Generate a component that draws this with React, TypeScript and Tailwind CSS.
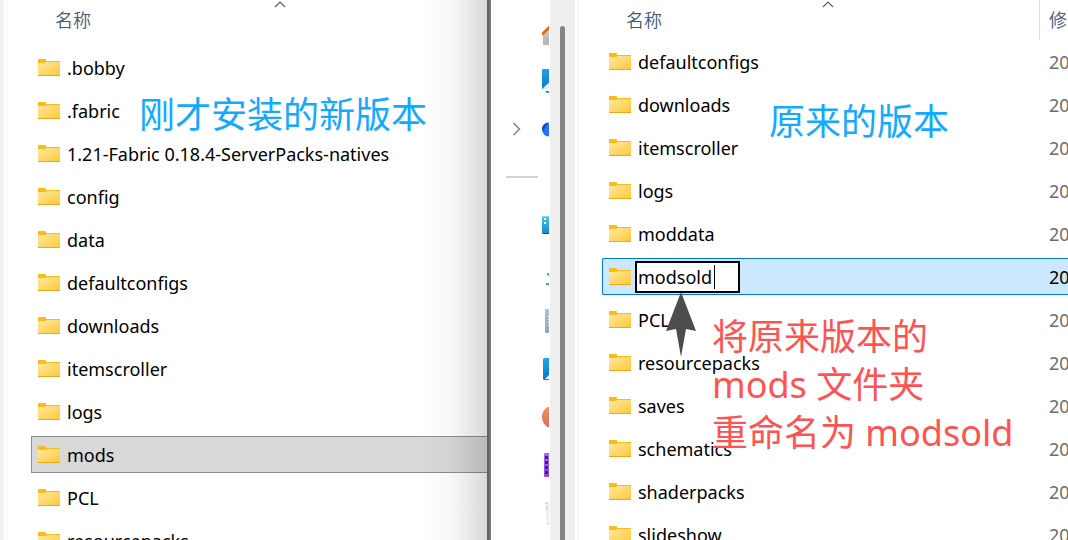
import React from "react";

type Entry = { name: string; state?: "inactive" | "renaming" };

const installed: Entry[] = [
  { name: ".bobby" },
  { name: ".fabric" },
  { name: "1.21-Fabric 0.18.4-ServerPacks-natives" },
  { name: "config" },
  { name: "data" },
  { name: "defaultconfigs" },
  { name: "downloads" },
  { name: "itemscroller" },
  { name: "logs" },
  { name: "mods", state: "inactive" },
  { name: "PCL" },
  { name: "resourcepacks" },
];

const original: Entry[] = [
  { name: "defaultconfigs" },
  { name: "downloads" },
  { name: "itemscroller" },
  { name: "logs" },
  { name: "moddata" },
  { name: "modsold", state: "renaming" },
  { name: "PCL" },
  { name: "resourcepacks" },
  { name: "saves" },
  { name: "schematics" },
  { name: "shaderpacks" },
  { name: "slideshow" },
];

function Gradients() {
  return (
    <svg className="absolute size-0" aria-hidden="true">
      <defs>
        <linearGradient id="folder" x1="0" y1="0" x2="1" y2="1">
          <stop offset="0" stopColor="#ffe8a3" />
          <stop offset="1" stopColor="#ffc937" />
        </linearGradient>
        <linearGradient id="wall" x1="0" y1="0" x2="0" y2="1">
          <stop offset="0" stopColor="#d6d6d6" />
          <stop offset="1" stopColor="#b2b2b2" />
        </linearGradient>
        <linearGradient id="azure" x1="0" y1="0" x2="0" y2="1">
          <stop offset="0" stopColor="#1ea5e8" />
          <stop offset="1" stopColor="#0a77cd" />
        </linearGradient>
        <linearGradient id="teal" x1="0" y1="0" x2="0" y2="1">
          <stop offset="0" stopColor="#36cfe0" />
          <stop offset="1" stopColor="#1786cc" />
        </linearGradient>
        <linearGradient id="slate" x1="0" y1="0" x2="0" y2="1">
          <stop offset="0" stopColor="#b4c2da" />
          <stop offset="1" stopColor="#8ba3c7" />
        </linearGradient>
        <linearGradient id="coral" x1="0" y1="0" x2="0" y2="1">
          <stop offset="0" stopColor="#f4925a" />
          <stop offset="1" stopColor="#d8686c" />
        </linearGradient>
        <linearGradient id="violet" x1="0" y1="0" x2="0" y2="1">
          <stop offset="0" stopColor="#b167f5" />
          <stop offset="1" stopColor="#8a46e6" />
        </linearGradient>
      </defs>
    </svg>
  );
}

function Folder() {
  return (
    <svg viewBox="0 0 22 17" className="h-[17px] w-[22px] shrink-0" aria-hidden="true">
      <path d="M0 0.8Q0 0 0.8 0H7Q8 0 8 1V2H21.5Q22 2 22 2.5V5H0Z" fill="#f9bb16" />
      <path d="M0 4H7L8.5 3H22V16.5H0Z" fill="url(#folder)" />
      <path d="M0 16H22V16.4Q22 17 21.4 17H0.6Q0 17 0 16.4Z" fill="#eaaa1c" />
    </svg>
  );
}

function SortMark() {
  return (
    <svg viewBox="0 0 12 7" className="h-[7px] w-3" aria-hidden="true">
      <path d="M1 6L6 1L11 6" fill="none" stroke="#5c5c5c" strokeWidth="1.2" />
    </svg>
  );
}

function NameCell({ entry, box }: { entry: Entry; box: string }) {
  return (
    <td className="p-0">
      <div className={`flex h-[37px] items-center border-y pl-1.5 ${box}`}>
        <Folder />
        {entry.state === "renaming" ? (
          <div className="relative ml-1">
            <input
              aria-label="名称"
              defaultValue={entry.name}
              className="block h-8 w-[105px] border-2 border-black bg-white pl-px text-lg leading-7 text-black outline-none"
            />
            <span className="absolute top-1 left-[79px] h-6 w-px bg-black" />
          </div>
        ) : (
          <span className="ml-[7px] whitespace-nowrap">{entry.name}</span>
        )}
      </div>
    </td>
  );
}

function boxFor(entry: Entry) {
  if (entry.state === "inactive") return "border-l border-[#8f8f8f] bg-[#d9d9d9]";
  if (entry.state === "renaming") return "rounded-l-xs border-l border-[#0078d4] bg-[#cce8ff]";
  return "border-l border-transparent";
}

function NavRow({ children, open }: { children: React.ReactNode; open?: boolean }) {
  return (
    <li className="flex h-12 shrink-0 items-center pl-[21px]">
      <span className="w-[30px] shrink-0">
        {open && (
          <svg viewBox="0 0 10 14" className="h-3.5 w-2.5" aria-hidden="true">
            <path d="M1.5 1L7.5 7L1.5 13" fill="none" stroke="#858585" strokeWidth="1.5" />
          </svg>
        )}
      </span>
      <svg viewBox="0 0 24 24" className="size-6 shrink-0" aria-hidden="true">
        {children}
      </svg>
    </li>
  );
}

function Navigation() {
  return (
    <nav className="w-[58px] shrink-0 overflow-hidden">
      <ul className="flex flex-col pt-[9px]">
        <NavRow>
          <path d="M1 13L12 2L23 13V23Q23 24 22 24H2Q1 24 1 23Z" fill="url(#wall)" />
          <path d="M0 13.5L12 2L24 13.5" fill="none" stroke="#e8690b" strokeWidth="2.8" />
        </NavRow>
        <NavRow>
          <rect width="24" height="20" rx="1" fill="url(#azure)" />
          <path d="M1 19L8 12.5V20H1Z" fill="#d9f0fd" />
          <path d="M3 22H21L20 24H5Z" fill="#3f86b8" />
        </NavRow>
        <NavRow open>
          <circle cx="7" cy="12.5" r="7" fill="#1f74f4" />
          <path d="M0 13.5Q-0.5 7 6 5.5L2 12.5Z" fill="#1549c8" />
        </NavRow>
        <li className="flex h-12 shrink-0 items-center pl-[15px]">
          <span className="h-0.5 w-8 bg-[#d4d4d4]" />
        </li>
        <NavRow>
          <rect y="3" width="24" height="18" rx="1" fill="url(#teal)" />
          <path d="M0 3.5H24" stroke="#7fe3ea" />
          <path d="M1 20.5H24" stroke="#0b4a73" />
          <path d="M2 5H4V7H2ZM2 9H4V11H2Z" fill="#fff" />
        </NavRow>
        <NavRow>
          <path d="M5 12H7V15H6V14H5ZM4 22H20V24H4Z" fill="#1fc38b" />
        </NavRow>
        <NavRow>
          <rect x="3" width="18" height="24" rx="1" fill="url(#slate)" />
          <path d="M6 7.5H18M6 10.5H18M6 13.5H18M6 16.5H18" stroke="#fff" />
        </NavRow>
        <NavRow>
          <rect x="1" y="1" width="22" height="22" rx="1.5" fill="url(#azure)" />
          <path d="M3 22L9 16V22Z" fill="#fff" />
        </NavRow>
        <NavRow>
          <circle cx="11.5" cy="12" r="11.5" fill="url(#coral)" />
        </NavRow>
        <NavRow>
          <rect x="2" width="20" height="24" rx="1" fill="url(#violet)" />
          <path d="M3 3H6V6H3ZM3 8H6V11H3ZM3 13H6V16H3ZM3 18H6V21H3Z" fill="#42236e" />
        </NavRow>
        <NavRow>
          <path d="M3 2H21L19 23H5Z" fill="#eeefef" />
          <path d="M3 2.5L6 1.5M5 22.5L7 23M6 5L4.5 9" fill="none" stroke="#c4c6c8" />
        </NavRow>
      </ul>
    </nav>
  );
}

export default function App() {
  return (
    <main className="relative grid h-screen grid-cols-[minmax(0,491fr)_minmax(0,577fr)] overflow-hidden bg-white font-['Noto_Sans','Noto_Sans_CJK_SC',sans-serif] text-lg leading-7 text-black">
      <Gradients />
      <section className="relative flex min-w-0 overflow-hidden border-r-2 border-[#757575]">
        <div className="w-1 shrink-0 bg-[#f0f0f0]" />
        <div className="ml-0.5 w-0.5 shrink-0 bg-[#f7f7f7]" />
        <div className="min-w-0 flex-1 pl-[23px]">
          <table className="w-full table-fixed border-collapse">
            <thead>
              <tr>
                <th className="relative h-[46px] p-0 align-top font-[350] text-[#44597c]">
                  <div className="flex h-10 items-center pl-6">名称</div>
                  <span className="absolute top-px left-[243px] flex">
                    <SortMark />
                  </span>
                </th>
              </tr>
            </thead>
            <tbody>
              {installed.map((entry) => (
                <tr key={entry.name} className="h-[43px]">
                  <NameCell entry={entry} box={boxFor(entry)} />
                </tr>
              ))}
            </tbody>
          </table>
        </div>
        <div className="w-0.5 shrink-0 bg-[#616161]" />
        <div className="pointer-events-none absolute inset-y-0 right-0.5 w-[70px] bg-linear-to-r from-transparent via-black/3 to-black/15" />
        <p className="absolute top-[91px] left-[139px] text-4xl leading-[48px] font-normal whitespace-nowrap text-[#12a9ff]">
          刚才安装的新版本
        </p>
      </section>

      <section className="relative flex min-w-0 overflow-hidden">
        <Navigation />
        <div className="ml-px flex w-[25px] shrink-0 bg-[#efefef] pt-[26px] pl-2.5">
          <div className="w-[5px] rounded-t-full bg-[#858585]" />
        </div>
        <div className="ml-0.5 w-0.5 shrink-0 bg-[#f7f7f7]" />
        <div className="min-w-0 flex-1 overflow-hidden pl-[23px]">
          <table className="w-full table-fixed border-collapse">
            <thead>
              <tr>
                <th className="relative h-10 p-0 font-[350] text-[#44597c]">
                  <div className="flex h-10 items-center pl-6">名称</div>
                  <span className="absolute top-px left-[220px] flex">
                    <SortMark />
                  </span>
                </th>
                <th className="w-[29px] p-0 font-[350] text-[#44597c]">
                  <div className="flex h-10 items-center border-l border-[#dedede] pl-[9px]">修</div>
                </th>
              </tr>
            </thead>
            <tbody>
              {original.map((entry) => (
                <tr key={entry.name} className="h-[43px]">
                  <NameCell entry={entry} box={boxFor(entry)} />
                  <td className="p-0">
                    <div
                      className={
                        entry.state === "renaming"
                          ? "flex h-[37px] items-center overflow-hidden border-y border-[#0078d4] bg-[#cce8ff] pl-2.5"
                          : "flex h-[37px] items-center overflow-hidden border-y border-transparent pl-2.5 text-[#6d6d6d]"
                      }
                    >
                      20
                    </div>
                  </td>
                </tr>
              ))}
            </tbody>
          </table>
        </div>
        <p className="absolute top-[98px] left-[278px] text-4xl leading-[48px] font-normal whitespace-nowrap text-[#12a9ff]">
          原来的版本
        </p>
        <svg viewBox="0 0 30 65" className="absolute top-[292px] left-[175px] h-[65px] w-[30px]" aria-hidden="true">
          <path d="M15 0L30 39L20 37L15 65L10 37L0 39Z" fill="#4d4d4d" />
        </svg>
        <p className="absolute top-[313px] left-[221px] text-4xl leading-[48px] font-normal whitespace-nowrap text-[#ff5252]">
          将原来版本的
          <br />
          mods 文件夹
          <br />
          重命名为 modsold
        </p>
      </section>
    </main>
  );
}
